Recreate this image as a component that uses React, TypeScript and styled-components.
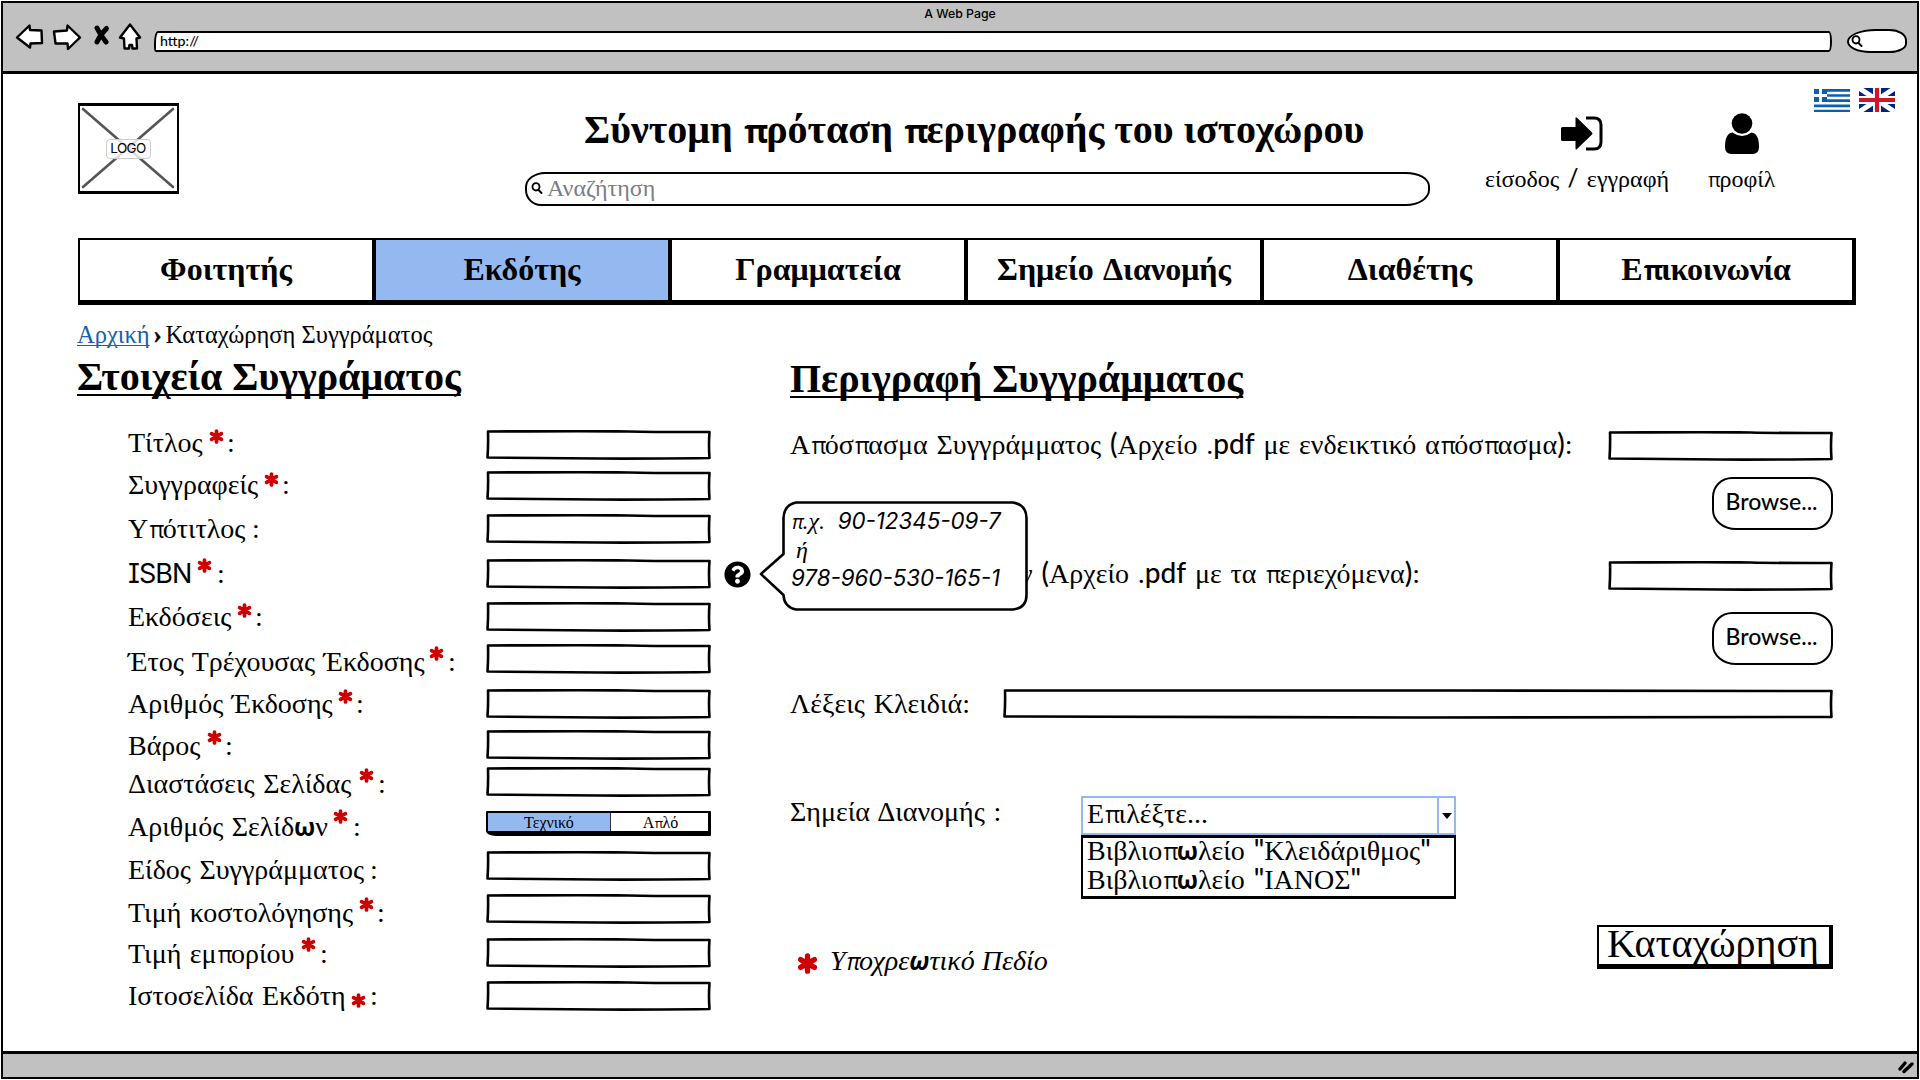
import React from "react";
import styled, { createGlobalStyle, css } from "styled-components";
import { FaQuestionCircle } from "react-icons/fa";

const serif = "'Liberation Serif', 'Times New Roman', serif";
const sans = "Lato, 'Open Sans', sans-serif";
const chromeGray = "#c1c1c1";
const blue = "#94b9f1";

const GlobalStyle = createGlobalStyle`
  * { box-sizing: border-box; }
  body { margin: 0; background: #fff; color: #000; overflow: hidden; }
`;

/* ---------- browser window ---------- */

const Screen = styled.div`
  width: 1920px;
  height: 1080px;
  padding: 1px;
`;

const Window = styled.div`
  display: flex;
  flex-direction: column;
  height: 1078px;
  border: 2px solid #000;
  background: #fff;
`;

const Chrome = styled.header`
  flex: none;
  height: 71px;
  background: ${chromeGray};
  border-bottom: 3px solid #000;
`;

const WindowTitle = styled.div`
  height: 20px;
  text-align: center;
  font: 500 12.3px/22px Inter, sans-serif;
`;

const Toolbar = styled.div`
  display: flex;
  align-items: flex-start;
  height: 34px;
`;

const ToolbarIcons = styled.svg`
  flex: none;
  display: block;
  width: 151px;
  height: 34px;
`;

const UrlBar = styled.div`
  width: 1678px;
  height: 21px;
  margin-top: 8px;
  padding-left: 4px;
  border: 2px solid #000;
  border-radius: 4px 3px 3px 2px / 12px 10px 10px 5px;
  background: #fff;
  font: 500 14.2px/15px ${sans};
`;

const BrowserSearch = styled.div`
  display: flex;
  align-items: center;
  width: 60px;
  height: 24px;
  margin: 6px 0 0 15px;
  padding-left: 2px;
  border: 2px solid #000;
  border-radius: 30px 18px 18px 24px / 13px 12px 10px 12px;
  background: #fff;
`;

const StatusBar = styled.footer`
  display: flex;
  flex: none;
  justify-content: flex-end;
  height: 26px;
  border-top: 3px solid #000;
  background: ${chromeGray};
`;

const Page = styled.div`
  flex: 1;
  min-height: 0;
  padding-left: 74px;
  font-family: ${serif};
`;

/* ---------- page header ---------- */

const PageHeader = styled.div`
  display: flex;
  align-items: flex-start;
  height: 164px;
  padding-left: 1px;
`;

const Logo = styled.div`
  display: grid;
  place-items: center;
  width: 101px;
  height: 91px;
  margin-top: 29px;
  border: solid #000;
  border-width: 3px 2px 3px 2px;
  > * { grid-area: 1 / 1; }
`;

const LogoLabel = styled.span`
  z-index: 1;
  width: 45px;
  height: 20px;
  margin-right: 1px;
  border: 1px solid #ccc;
  border-radius: 4px;
  background: rgba(255, 255, 255, 0.8);
  text-align: center;
  font: 13.4px/17px Inter, sans-serif;
  letter-spacing: -0.55px;
`;

const Center = styled.div`
  width: 905px;
  margin: 32px 0 0 346px;
`;

const SiteTitle = styled.h1`
  margin: 0 0 18px;
  padding-left: 59px;
  font: bold 40px/48px ${serif};
  white-space: nowrap;
`;

const SearchBox = styled.div`
  display: flex;
  align-items: center;
  gap: 4px;
  height: 34px;
  padding: 0 0 2px 4px;
  border: 2px solid #000;
  border-radius: 20px 24px 24px 16px / 15px 14px 16px 16px;
  color: #7c7c86;
  font-size: 24px;
`;

const Action = styled.div<{ $gap: number; $shift: number }>`
  display: flex;
  flex-direction: column;
  align-items: center;
  gap: 10px;
  margin: 38px 0 0 ${(p) => p.$gap}px;
  font-size: 24px;
  line-height: 28px;
  word-spacing: 2.3px;
  white-space: nowrap;
  > svg { margin-left: ${(p) => p.$shift}px; }
`;

const Flags = styled.div`
  display: flex;
  gap: 9px;
  margin: 14px 22px 0 auto;
`;

/* ---------- navigation ---------- */

const Nav = styled.nav`
  display: flex;
  width: 1778px;
  height: 67px;
  margin-left: 1px;
  border-left: 2px solid #000;
`;

const NavItem = styled.a<{ $active?: boolean; $tight?: boolean }>`
  display: flex;
  flex: 1;
  align-items: center;
  justify-content: center;
  padding-bottom: 2px;
  border: solid #000;
  border-width: 2px 4px 5px 0;
  background: ${(p) => (p.$active ? blue : "#fff")};
  font-size: 32px;
  font-weight: bold;
  word-spacing: 3px;
  letter-spacing: ${(p) => (p.$tight ? "-0.3px" : "normal")};
  white-space: nowrap;
`;

const Breadcrumb = styled.div`
  display: flex;
  align-items: baseline;
  height: 31px;
  margin-top: 15px;
  font-size: 24.5px;
  line-height: 30px;
`;

const HomeLink = styled.a`
  color: #1461ad;
  text-decoration: underline;
  text-decoration-thickness: 1px;
  text-underline-offset: 2px;
  text-decoration-skip-ink: none;
`;

const Chevron = styled.span`
  width: 16px;
  padding-left: 4px;
  font-weight: bold;
  -webkit-text-stroke: 0.5px #000;
`;

/* ---------- forms ---------- */

const Main = styled.main`
  display: flex;
  margin-top: 2px;
`;

const LeftColumn = styled.section`
  width: 713px;
`;

const RightColumn = styled.section`
  width: 1044px;
  padding-top: 2px;
`;

const SectionTitle = styled.h2`
  margin: 0;
  font: bold 40px/48px ${serif};
  text-decoration: underline;
  text-decoration-thickness: 2px;
  text-underline-offset: 4px;
  text-decoration-skip-ink: none;
`;

const FieldList = styled.div`
  padding: 23px 0 0 51px;
`;

const FieldRow = styled.div<{ $height: number }>`
  position: relative;
  display: flex;
  align-items: flex-start;
  height: ${(p) => p.$height}px;
`;

const FieldLabel = styled.label<{ $top: number }>`
  display: flex;
  width: 358px;
  margin-top: ${(p) => p.$top}px;
  font-size: 28px;
  line-height: 32px;
  white-space: nowrap;
`;

const FieldName = styled.span<{ $width: number }>`
  width: ${(p) => p.$width}px;
  word-spacing: 1.5px;
`;

const StarSlot = styled.span<{ $lift: number }>`
  flex: none;
  display: flex;
  margin: ${(p) => 17 - p.$lift}px 0 0 7px;
`;

const Colon = styled.span<{ $gap: number }>`
  margin-left: ${(p) => p.$gap - 1}px;
`;

const TextBox = styled.div<{ $width?: number; $top?: number }>`
  flex: none;
  display: flex;
  width: ${(p) => p.$width ?? 225}px;
  height: 30px;
  margin-top: ${(p) => p.$top ?? 6}px;
`;

const Toggle = styled.div`
  display: flex;
  width: 225px;
  height: 25px;
  margin-top: 6px;
  border: solid #000;
  border-width: 2px 3px 5px 2px;
  border-radius: 1px 1px 1px 10px / 1px 1px 1px 5px;
  font-size: 16px;
  line-height: 20px;
  text-align: center;
`;

const ToggleOption = styled.span<{ $on?: boolean }>`
  width: ${(p) => (p.$on ? 124 : 98)}px;
  padding-left: ${(p) => (p.$on ? 0 : 2)}px;
  background: ${(p) => (p.$on ? blue : "#fff")};
  ${(p) => p.$on && css`border-right: 1px solid #333;`}
`;

const HelpIcon = styled(FaQuestionCircle)`
  width: 27px;
  height: 27px;
  margin: 8px 0 0 13px;
`;

const Tooltip = styled.div`
  position: absolute;
  z-index: 2;
  left: 631px;
  top: -52px;
  width: 270px;
  height: 111px;
  padding: 6px 0 0 32px;
  font: italic 22.3px/28.5px Inter, sans-serif;
  white-space: pre;
`;

const Balloon = styled.svg`
  position: absolute;
  z-index: -1;
  left: 0;
  top: 0;
`;

const TipSerif = styled.span<{ $pad?: number }>`
  padding-left: ${(p) => p.$pad ?? 0}px;
  font: italic 24px/28px ${serif};
`;

const Block = styled.div<{ $top: number }>`
  display: flex;
  align-items: flex-start;
  justify-content: space-between;
  height: 32px;
  margin-top: ${(p) => p.$top}px;
  padding-right: 1px;
  font-size: 28px;
  line-height: 32px;
  white-space: nowrap;
  word-spacing: 1.8px;
`;

const Offset = styled.span<{ $left: number }>`
  padding-left: ${(p) => p.$left}px;
`;

const BrowseRow = styled.div<{ $top: number }>`
  display: flex;
  justify-content: flex-end;
  margin: ${(p) => p.$top}px 1px 0 0;
`;

const BrowseButton = styled.button`
  width: 121px;
  height: 53px;
  padding: 0 2px 5px 0;
  border: 2px solid #000;
  border-radius: 20px 22px 20px 24px / 20px 18px 20px 20px;
  background: #fff;
  color: #000;
  font: 500 23px/40px ${sans};
`;

const Select = styled.div`
  position: relative;
  width: 375px;
  height: 40px;
  margin: 0 377px 0 0;
`;

const SelectValue = styled.div`
  display: flex;
  justify-content: space-between;
  height: 39px;
  padding-left: 4px;
  border: 2px solid ${blue};
  line-height: 32px;
`;

const SelectArrow = styled.span`
  display: grid;
  place-items: center;
  width: 17px;
  border-left: 2px solid ${blue};
`;

const Menu = styled.div`
  position: absolute;
  left: 0;
  top: 39px;
  width: 375px;
  height: 64px;
  padding-left: 4px;
  border: solid #000;
  border-width: 3px 2px 3px;
  background: #fff;
`;

const MenuItem = styled.div`
  height: 29px;
  line-height: 25px;
`;

const Bottom = styled.div`
  display: flex;
  align-items: flex-start;
  justify-content: space-between;
  margin: 97px 1px 0 0;
`;

const Legend = styled.div`
  display: flex;
  gap: 12px;
  margin: 20px 0 0 7px;
  font: italic 28px/32px ${serif};
`;

const LegendStar = styled.span`
  display: flex;
  padding-top: 8px;
`;

const SubmitButton = styled.button`
  width: 236px;
  height: 44px;
  padding: 0 2px 5px 0;
  border: solid #000;
  border-width: 2px 4px 5px 2px;
  background: #fff;
  color: #000;
  font: 40px/34px ${serif};
`;

/* ---------- text helpers ---------- */

const Pi = styled.span`
  margin: 0 -0.07em 0 0.05em;
  font-family: 'Open Sans', sans-serif;
  font-size: 0.82em;
  line-height: 0;
`;

const Omega = styled.span`
  font-family: 'Open Sans', sans-serif;
  font-size: 0.88em;
  font-weight: bold;
  line-height: 0;
`;

const Latin = styled.span`
  font-family: ${sans};
  font-weight: 500;
  line-height: 0;
`;

const Isbn = styled.span`
  font: 27px/31px Inter, sans-serif;
  font-feature-settings: "cv08";
  letter-spacing: -1px;
`;

function Greek({ children, omega = true }: { children: string; omega?: boolean }) {
  return (
    <span>
      {children.split(/(π|ω|pdf|[()/"])/).map((part, i) => {
        if (part === "π") return <Pi key={i}>π</Pi>;
        if (part === "ω" && omega) return <Omega key={i}>ω</Omega>;
        if (/^(pdf|[()/"])$/.test(part)) return <Latin key={i}>{part}</Latin>;
        return part;
      })}
    </span>
  );
}

const Magnifier = ({ size }: { size: number }) => (
  <svg width={size} height={size} viewBox="0 0 12 12" fill="none" stroke="#000" strokeWidth="1.9" strokeLinecap="round">
    <ellipse cx="5" cy="4.800" rx="3.500" ry="3.700" />
    <path d="M7.500 8l3 3" />
  </svg>
);

const Asterisk = ({ size }: { size: number }) => (
  <svg width={size} height={size} viewBox="0 0 14 14" stroke="#d00000" strokeWidth="3.500" strokeLinecap="round">
    <path d="M7 1.900V12.100M2.400 4.400L11.600 9.600M11.600 4.400L2.400 9.600" />
  </svg>
);

/* Empty input whose outline wavers like a pen stroke. */
function Input({ width = 225, top }: { width?: number; top?: number }) {
  const x = width - 1.5;
  const m = width / 2;
  return (
    <TextBox $width={width} $top={top}>
      <svg width={width} height="30" fill="#fff" stroke="#000" strokeWidth="2.600" strokeLinejoin="round">
        <path d={`M2 1.500Q${m} 0.800 ${m + 30} 1.500T${x} 2Q${x - 1} 15 ${x} 28Q${m + 40} 28.800 ${m} 28.500T1.500 27.500Q2.400 14 2 1.500Z`} />
      </svg>
    </TextBox>
  );
}

type Field = { name: string; width: number; top: number; height: number; lift?: number; gap: number; kind?: "isbn" | "toggle" };

const fields: Field[] = [
  { name: "Τίτλος", width: 74, top: 3, height: 41, lift: 15, gap: 4 },
  { name: "Συγγραφείς", width: 129, top: 4, height: 43, lift: 14, gap: 4 },
  { name: "Υπότιτλος", width: 116, top: 5, height: 45, gap: 9 },
  { name: "ISBN", width: 62, top: 5, height: 43, lift: 17, gap: 6, kind: "isbn" },
  { name: "Εκδόσεις", width: 102, top: 5, height: 42, lift: 15, gap: 4 },
  { name: "Έτος Τρέχουσας Έκδοσης", width: 294, top: 8, height: 45, lift: 17, gap: 5 },
  { name: "Αριθμός Έκδοσης", width: 203, top: 5, height: 41, lift: 16, gap: 4 },
  { name: "Βάρος", width: 72, top: 6, height: 37, lift: 17, gap: 4 },
  { name: "Διαστάσεις Σελίδας", width: 224, top: 7, height: 44, lift: 17, gap: 5 },
  { name: "Αριθμός Σελίδων", width: 198, top: 6, height: 40, lift: 19, gap: 6, kind: "toggle" },
  { name: "Είδος Συγγράμματος", width: 234, top: 9, height: 43, gap: 9 },
  { name: "Τιμή κοστολόγησης", width: 224, top: 9, height: 44, lift: 17, gap: 4 },
  { name: "Τιμή εμπορίου", width: 166, top: 6, height: 43, lift: 18, gap: 5 },
  { name: "Ιστοσελίδα Εκδότη", width: 216, top: 5, height: 40, lift: 4, gap: 5 },
];

export default function App() {
  return (
    <Screen>
      <GlobalStyle />
      <Window>
        <Chrome>
          <WindowTitle>A Web Page</WindowTitle>
          <Toolbar>
            <ToolbarIcons viewBox="3 23 151 34" fill="#fff" stroke="#000" strokeWidth="2.4" strokeLinejoin="round">
              <path d="M17 37.5 L29.5 25.500 L30 30 L41.500 30.500 L42 43 L30.500 43.500 L30 47.500 Z" />
              <path d="M54 31.500 L67 30.500 L67.500 25.500 L80 37.500 L68 49 L67.500 43.500 L55.500 43.500 Z" />
              <path d="M97 28 Q100 34 106 42 M106.500 28.500 Q100 35 97 42" fill="none" strokeWidth="5" strokeLinecap="round" />
              <path d="M130 24.500 L140 37.500 L136.500 38.500 L137 48.500 L132.500 48.500 L132 45 L129.500 45 L129 48.500 L124.500 48.500 L124 38.500 L120 37.500 Z" />
            </ToolbarIcons>
            <UrlBar>http://</UrlBar>
            <BrowserSearch><Magnifier size={12} /></BrowserSearch>
          </Toolbar>
        </Chrome>

        <Page>
          <PageHeader>
            <Logo>
              <svg width="97" height="85" viewBox="0 0 97 85" stroke="#555" strokeWidth="2.600" strokeLinecap="round">
                <path d="M3 3 L93 81 M93 3 L3 81" />
              </svg>
              <LogoLabel>LOGO</LogoLabel>
            </Logo>
            <Center>
              <SiteTitle><Greek>Σύντομη πρόταση περιγραφής του ιστοχώρου</Greek></SiteTitle>
              <SearchBox><Magnifier size={12} />Αναζήτηση</SearchBox>
            </Center>
            <Action $gap={55} $shift={9}>
              <svg width="42" height="43" viewBox="0 0 42 43">
                <path d="M1.500 15h13V6.500q0-2 1.500-.7l15 14.700q1 1 0 2L16 37q-1.500 1.300-1.500-.7V29h-13q-1.500 0-1.500-1.500v-11Q0 15 1.500 15Z" />
                <path d="M25 6h8q7 0 7 7v17q0 7-7 7h-8" fill="none" stroke="#000" strokeWidth="3" />
              </svg>
              <Greek>είσοδος / εγγραφή</Greek>
            </Action>
            <Action $gap={38} $shift={1}>
              <svg width="34" height="43" viewBox="0 0 34 43">
                <circle cx="17" cy="11.500" r="10.300" />
                <path d="M7.500 20.500Q17 27.500 26.500 20.500Q34 21.500 34 35q0 7-6.500 7h-21Q0 42 0 35q0-13.500 7.500-14.500Z" />
              </svg>
              <Greek>προφίλ</Greek>
            </Action>
            <Flags>
              <svg width="36" height="24" viewBox="0 0 36 24">
                <rect y="1" width="36" height="23" fill="#0d5eaf" />
                <path d="M13 5h23M13 10h23M0 15.300h36M0 20.400h36" stroke="#fff" strokeWidth="2.500" />
                <path d="M6.500 1v13M0 7.500h13" stroke="#fff" strokeWidth="2.800" />
              </svg>
              <svg width="36" height="24" viewBox="0 0 36 24">
                <rect width="36" height="24" fill="#00247d" />
                <path d="M0 0l36 24M36 0L0 24" stroke="#fff" strokeWidth="5" />
                <path d="M18 0v24M0 12h36" stroke="#fff" strokeWidth="8" />
                <path d="M18 0v24M0 12h36" stroke="#cf142b" strokeWidth="4.200" />
              </svg>
            </Flags>
          </PageHeader>

          <Nav>
            <NavItem>Φοιτητής</NavItem>
            <NavItem $active>Εκδότης</NavItem>
            <NavItem>Γραμματεία</NavItem>
            <NavItem>Σημείο Διανομής</NavItem>
            <NavItem>Διαθέτης</NavItem>
            <NavItem $tight><Greek omega={false}>Επικοινωνία</Greek></NavItem>
          </Nav>

          <Breadcrumb>
            <HomeLink>Αρχική</HomeLink>
            <Chevron>›</Chevron>
            <span>Καταχώρηση Συγγράματος</span>
          </Breadcrumb>

          <Main>
            <LeftColumn>
              <SectionTitle>Στοιχεία Συγγράματος</SectionTitle>
              <FieldList>
                {fields.map((f) => (
                  <FieldRow key={f.name} $height={f.height}>
                    <FieldLabel $top={f.top}>
                      <FieldName $width={f.width}>
                        {f.kind === "isbn" ? <Isbn>{f.name}</Isbn> : <Greek>{f.name}</Greek>}
                      </FieldName>
                      {f.lift !== undefined && <StarSlot $lift={f.lift}><Asterisk size={15} /></StarSlot>}
                      <Colon $gap={f.gap}>:</Colon>
                    </FieldLabel>
                    {f.kind === "toggle" ? (
                      <Toggle>
                        <ToggleOption $on>Τεχνικό</ToggleOption>
                        <ToggleOption><Greek>Απλό</Greek></ToggleOption>
                      </Toggle>
                    ) : (
                      <Input />
                    )}
                    {f.kind === "isbn" && (
                      <>
                        <HelpIcon />
                        <Tooltip>
                          <Balloon width="270" height="111" fill="#fff" stroke="#000" strokeWidth="2.600" strokeLinejoin="round">
                            <path d="M37 1.500H254Q267.500 4 267.500 17V94Q267.500 107 254 108.500H37Q25 106 24.500 94L2 73L24.500 53V17Q25 4 37 1.500Z" />
                          </Balloon>
                          <div><TipSerif><Greek>π.χ.</Greek></TipSerif>{"  "}90-12345-09-7</div>
                          <div><TipSerif $pad={5}>ή</TipSerif></div>
                          <div>978-960-530-165-1</div>
                        </Tooltip>
                      </>
                    )}
                  </FieldRow>
                ))}
              </FieldList>
            </LeftColumn>

            <RightColumn>
              <SectionTitle>Περιγραφή Συγγράμματος</SectionTitle>
              <Block $top={26}>
                <Greek>Απόσπασμα Συγγράμματος (Αρχείο .pdf με ενδεικτικό απόσπασμα):</Greek>
                <Input top={2} />
              </Block>
              <BrowseRow $top={16}><BrowseButton>Browse...</BrowseButton></BrowseRow>
              <Block $top={28}>
                <Offset $left={230}><Greek>ν (Αρχείο .pdf με τα περιεχόμενα):</Greek></Offset>
                <Input top={3} />
              </Block>
              <BrowseRow $top={22}><BrowseButton>Browse...</BrowseButton></BrowseRow>
              <Block $top={23}>
                <span>Λέξεις Κλειδιά:</span>
                <Input width={830} top={1} />
              </Block>
              <Block $top={76}>
                <span>Σημεία Διανομής :</span>
                <Select>
                  <SelectValue>
                    <Greek>Επιλέξτε...</Greek>
                    <SelectArrow>
                      <svg width="10" height="6" viewBox="0 0 10 6"><path d="M0 0h10L5 6Z" /></svg>
                    </SelectArrow>
                  </SelectValue>
                  <Menu>
                    <MenuItem><Greek>Βιβλιοπωλείο "Κλειδάριθμος"</Greek></MenuItem>
                    <MenuItem><Greek>Βιβλιοπωλείο "ΙΑΝΟΣ"</Greek></MenuItem>
                  </Menu>
                </Select>
              </Block>
              <Bottom>
                <Legend><LegendStar><Asterisk size={21} /></LegendStar><Greek>Υποχρεωτικό Πεδίο</Greek></Legend>
                <SubmitButton>Καταχώρηση</SubmitButton>
              </Bottom>
            </RightColumn>
          </Main>
        </Page>

        <StatusBar>
          <svg width="22" height="22" viewBox="0 0 22 22" stroke="#000" strokeWidth="3.500" strokeLinecap="round">
            <path d="M5 15L10 9M9 17.500L17 10" />
          </svg>
        </StatusBar>
      </Window>
    </Screen>
  );
}
